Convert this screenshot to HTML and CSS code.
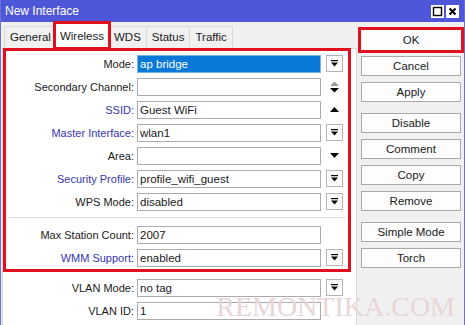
FILE: index.html
```html
<!DOCTYPE html>
<html lang="en">
<head>
	<meta charset="UTF-8">
	<title>New Interface</title>
	<link rel="stylesheet" href="styles.css">
</head>
<body>
	<div class="window">
		<div class="titlebar">
			<span class="title">New Interface</span>
			<div class="winbtns">
				<span class="wbtn"><svg width="13" height="13" viewBox="0 0 13 13"><rect x="2.5" y="2.5" width="8" height="8" fill="none" stroke="#000" stroke-width="1.4"/></svg></span>
				<span class="wbtn"><svg width="13" height="13" viewBox="0 0 13 13"><path d="M3.5 3.5 L9.5 9.5 M9.5 3.5 L3.5 9.5" stroke="#000" stroke-width="2"/></svg></span>
			</div>
		</div>

		<div class="main">
			<div class="left">
				<div class="tabs">
					<span class="tab">General</span>
					<span class="tab active">Wireless</span>
					<span class="tab">WDS</span>
					<span class="tab">Status</span>
					<span class="tab">Traffic</span>
				</div>

				<div class="panel">
					<div class="marked">
						<div class="row">
							<label>Mode:</label>
							<div class="field selected">ap bridge</div>
							<span class="ddbtn"><svg width="9" height="9" viewBox="0 0 9 9"><rect x="1" y="1" width="7" height="1.2" fill="#000"/><path d="M1 3.5 H8 L4.5 7.5 Z" fill="#000"/></svg></span>
						</div>
						<div class="row">
							<label>Secondary Channel:</label>
							<div class="field"></div>
							<span class="arrows"><svg width="11" height="14" viewBox="0 0 11 14"><path d="M1 6 H10 L5.5 1.5 Z" fill="#9a9a9a"/><path d="M1 8 H10 L5.5 12.5 Z" fill="#000"/></svg></span>
						</div>
						<div class="row">
							<label class="blue">SSID:</label>
							<div class="field">Guest WiFi</div>
							<span class="arrows"><svg width="11" height="9" viewBox="0 0 11 9"><path d="M1 7 H10 L5.5 2 Z" fill="#000"/></svg></span>
						</div>
						<div class="row">
							<label class="blue">Master Interface:</label>
							<div class="field">wlan1</div>
							<span class="ddbtn"><svg width="9" height="9" viewBox="0 0 9 9"><rect x="1" y="1" width="7" height="1.2" fill="#000"/><path d="M1 3.5 H8 L4.5 7.5 Z" fill="#000"/></svg></span>
						</div>
						<div class="row">
							<label>Area:</label>
							<div class="field"></div>
							<span class="arrows"><svg width="11" height="9" viewBox="0 0 11 9"><path d="M1 2 H10 L5.5 7 Z" fill="#000"/></svg></span>
						</div>
						<div class="row">
							<label class="blue">Security Profile:</label>
							<div class="field">profile_wifi_guest</div>
							<span class="ddbtn"><svg width="9" height="9" viewBox="0 0 9 9"><rect x="1" y="1" width="7" height="1.2" fill="#000"/><path d="M1 3.5 H8 L4.5 7.5 Z" fill="#000"/></svg></span>
						</div>
						<div class="row">
							<label>WPS Mode:</label>
							<div class="field">disabled</div>
							<span class="ddbtn"><svg width="9" height="9" viewBox="0 0 9 9"><rect x="1" y="1" width="7" height="1.2" fill="#000"/><path d="M1 3.5 H8 L4.5 7.5 Z" fill="#000"/></svg></span>
						</div>

						<div class="sep"></div>

						<div class="row">
							<label>Max Station Count:</label>
							<div class="field wide">2007</div>
						</div>
						<div class="row">
							<label class="blue">WMM Support:</label>
							<div class="field">enabled</div>
							<span class="ddbtn"><svg width="9" height="9" viewBox="0 0 9 9"><rect x="1" y="1" width="7" height="1.2" fill="#000"/><path d="M1 3.5 H8 L4.5 7.5 Z" fill="#000"/></svg></span>
						</div>
					</div>

					<div class="rest">
						<div class="row">
							<label>VLAN Mode:</label>
							<div class="field">no tag</div>
							<span class="ddbtn"><svg width="9" height="9" viewBox="0 0 9 9"><rect x="1" y="1" width="7" height="1.2" fill="#000"/><path d="M1 3.5 H8 L4.5 7.5 Z" fill="#000"/></svg></span>
						</div>
						<div class="row">
							<label>VLAN ID:</label>
							<div class="field wide">1</div>
						</div>
					</div>
				</div>
			</div>

			<div class="actions">
				<div class="group">
					<button class="ok">OK</button>
					<button>Cancel</button>
					<button>Apply</button>
				</div>
				<div class="group">
					<button>Disable</button>
					<button>Comment</button>
					<button>Copy</button>
					<button>Remove</button>
				</div>
				<div class="group">
					<button>Simple Mode</button>
					<button>Torch</button>
				</div>
			</div>
		</div>

		<div class="watermark">REMONTIKA.COM</div>
	</div>
</body>
</html>
```

FILE: styles.css
```css
body {
	margin: 0;
	font-family: 'Liberation Sans', Arial, sans-serif;
	font-size: 11px;
	color: #1a1a1a;
}

.window {
	position: relative;
	width: 465px;
	height: 325px;
	box-sizing: border-box;
	border-left: 1px solid #6a70dc;
	border-right: 1px solid #6a70dc;
	background-color: #f0f0f0;
	overflow: hidden;
}

.titlebar {
	height: 22px;
	background-color: #4f57d9;
	display: flex;
	align-items: center;
	justify-content: space-between;
	padding: 0 5px 0 4px;
}

.title {
	color: #fff;
	font-size: 12px;
}

.winbtns {
	display: flex;
	gap: 2px;
}

.wbtn {
	width: 13px;
	height: 13px;
	background-color: #fff;
	display: flex;
}

.main {
	display: flex;
	padding-left: 1px;
}

.left {
	width: 355px;
	display: flex;
	flex-direction: column;
}

.tabs {
	display: flex;
	align-items: flex-end;
	height: 26px;
	padding-left: 2px;
}

.tab {
	height: 21px;
	line-height: 21px;
	padding: 0 5px;
	border: 1px solid #d9d9d9;
	border-bottom: none;
	background-color: #f0f0f0;
	margin-right: -1px;
	font-size: 11.5px;
}

.tab.active {
	height: 24px;
	line-height: 24px;
	background-color: #fff;
	padding: 0 4px;
	margin-left: -1px;
	outline: 3px solid #e0101c;
	outline-offset: -1px;
	position: relative;
	z-index: 1;
}

.panel {
	background-color: #fff;
	border: 1px solid #d9d9d9;
	border-bottom: none;
	height: 277px;
	box-sizing: border-box;
}

.marked {
	width: 348px;
	box-sizing: border-box;
	border: 3px solid #e0101c;
	padding: 1px 0 0 0;
	margin-top: -1px;
}

.row {
	display: flex;
	align-items: center;
	height: 23px;
}

.row label {
	width: 128px;
	text-align: right;
	margin-right: 3px;
}

.row label.blue {
	color: #3535b0;
}

.field {
	width: 184px;
	height: 18px;
	box-sizing: border-box;
	border: 1px solid #acacac;
	line-height: 16px;
	padding-left: 2px;
	background-color: #fff;
	font-size: 11.5px;
}

.field.selected {
	background-color: #0a78d7;
	color: #fff;
	border-color: #7ab4e8;
}

.ddbtn {
	width: 17px;
	height: 17px;
	box-sizing: border-box;
	border: 1px solid #b4b4b4;
	margin-left: 5px;
	display: flex;
	align-items: center;
	justify-content: center;
}

.arrows {
	width: 17px;
	margin-left: 5px;
	display: flex;
	justify-content: center;
}

.sep {
	height: 1px;
	background-color: #dedede;
	margin: 4px 3px 5px 3px;
}

.rest {
	margin-top: 4px;
	margin-left: 3px;
}

.actions {
	margin-left: 4px;
	padding-top: 8px;
	width: 100px;
	display: flex;
	flex-direction: column;
	gap: 11px;
}

.group {
	display: flex;
	flex-direction: column;
	gap: 6px;
}

.actions button {
	height: 20px;
	width: 100px;
	font-family: 'Liberation Sans', Arial, sans-serif;
	font-size: 11.5px;
	color: #1a1a1a;
	background-color: #fdfdfd;
	border: 1px solid #a9a9a9;
	padding: 0;
}

.actions button.ok {
	outline: 3px solid #e0101c;
	outline-offset: 0;
	border-color: #fdfdfd;
}

.watermark {
	position: absolute;
	right: 9px;
	bottom: 2px;
	font-family: 'Liberation Serif', 'Times New Roman', serif;
	font-size: 28px;
	line-height: 32px;
	color: #e8d6d7;
}
```
